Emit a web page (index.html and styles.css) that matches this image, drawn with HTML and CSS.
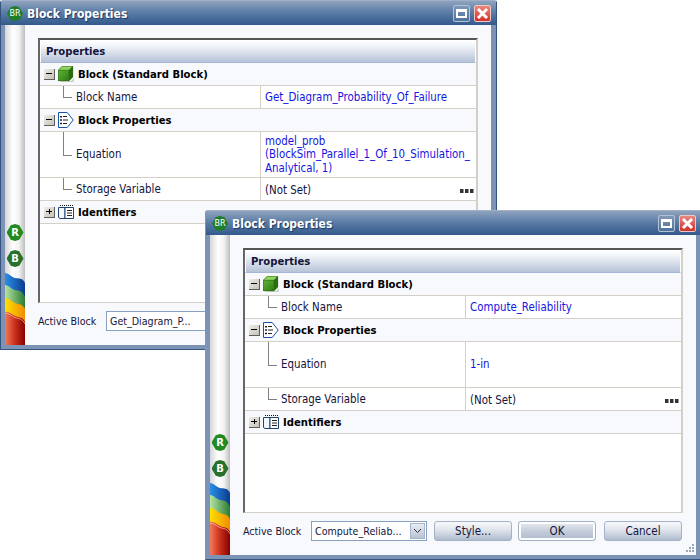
FILE: index.html
```html
<!DOCTYPE html>
<html lang="en">
<head>
<meta charset="utf-8">
<title>Block Properties</title>
<link rel="stylesheet" href="styles.css">
</head>
<body>
<svg class="defs" width="0" height="0" aria-hidden="true">
  <defs>
    <linearGradient id="gBlue" x1="0" x2="1" y1="0" y2="0"><stop offset="0" stop-color="#2a8fe8"/><stop offset="1" stop-color="#0b3b8c"/></linearGradient>
    <linearGradient id="gGreen" x1="0" x2="1" y1="0" y2="0"><stop offset="0" stop-color="#b4e4a4"/><stop offset="1" stop-color="#2c7a30"/></linearGradient>
    <linearGradient id="gYellow" x1="0" x2="1" y1="0" y2="0"><stop offset="0" stop-color="#ffe000"/><stop offset="1" stop-color="#f08c00"/></linearGradient>
    <linearGradient id="gRed" x1="0" x2="1" y1="0" y2="0"><stop offset="0" stop-color="#f5795a"/><stop offset=".5" stop-color="#c8301c"/><stop offset="1" stop-color="#860000"/></linearGradient>
    <linearGradient id="gCube" x1="0" x2="1" y1="0" y2="1"><stop offset="0" stop-color="#62b436"/><stop offset="1" stop-color="#2c7c12"/></linearGradient>
    <symbol id="waves" viewBox="0 0 20 72">
      <path fill="url(#gBlue)" d="M0 0C4 0 6 4 10 5S17 4 20 10V30H0Z"/>
      <path fill="url(#gGreen)" d="M0 12C4 12 6 16 10 17S17 17 20 24V44H0Z"/>
      <path fill="url(#gYellow)" d="M0 25C4 25 6 28 10 30S17 30 20 36V52H0Z"/>
      <path fill="url(#gRed)" d="M0 39C4 38 6 41 10 43S17 43 20 49V72H0Z"/>
      <path fill="none" stroke="#ffc4ac" stroke-opacity=".7" d="M0 40.500C4 39.500 6 43 10 44.500S17 45 20 51"/>
    </symbol>
    <symbol id="cube" viewBox="0 0 16 16">
      <path fill="#c9cfc6" d="M2 15h11l3-3v3l-1 1H3z"/>
      <path fill="url(#gCube)" d="M0 4h11v11H0z"/>
      <path fill="#93d260" d="M0 4 4 0h11l-4 4z"/>
      <path fill="#2b6d10" d="M11 4l4-4v11l-4 4z"/>
      <path fill="none" stroke="#2e6d1a" stroke-width=".6" d="M.3 4.300h10.700v10.400H.3zM.3 4.300 4.200.3h10.500V11L11 14.700M11 4.300 14.700.3"/>
    </symbol>
    <symbol id="tag" viewBox="0 0 16 16">
      <path fill="#fff" stroke="#1c4fa6" d="M.5.5h8.700l6 7.500-6 7.500H.5z"/>
      <path fill="none" stroke="#222" d="M5 4.500h4M5 8h5M5 11.500h4"/>
      <path fill="#222" d="M2 4h2v1.500H2zM2 7.200h2v1.500H2zM2 10.700h2v1.500H2z"/>
    </symbol>
    <symbol id="book" viewBox="0 0 16 15">
      <path fill="#111" d="M2 0h1v1H2zM4 0h1v1H4zM6 0h1v1H6zM8 0h1v1H8zM10 0h1v1h-1zM12 0h1v1h-1zM14 0h1v1h-1z"/>
      <path fill="#f2f7fc" stroke="#1f4470" d="M.5 2.500h6.500v11H2L.5 12.500z"/>
      <path fill="#fff" stroke="#1f4470" d="M7 2.500h8.500v11H7z"/>
      <path fill="none" stroke="#222" d="M9 5.500h5M9 8h5M9 10.500h5"/>
    </symbol>
  </defs>
</svg>

<main class="desktop">
  <section class="window window-back">
    <header class="titlebar">
      <span class="app-badge">BR</span>
      <h1 class="title">Block Properties</h1>
      <span class="win-btn win-max"><i class="max-glyph"></i></span>
      <span class="win-btn win-close"><svg width="13" height="13" viewBox="0 0 13 13"><path d="M2 2l9 9M11 2l-9 9" stroke="#fff" stroke-width="3"/></svg></span>
    </header>
    <div class="frame">
      <aside class="sidebar">
        <span class="rail-badge">R</span>
        <span class="rail-badge">B</span>
        <svg class="waves" width="20" height="72"><use href="#waves"/></svg>
      </aside>
      <div class="panel">
        <div class="grid">
          <div class="grid-head">Properties</div>
          <div class="group"><span class="toggle minus"></span><svg class="gi" width="16" height="16"><use href="#cube"/></svg><span>Block (Standard Block)</span></div>
          <div class="row"><div class="key"><i class="elbow"></i><span class="key-text">Block Name</span></div><div class="val link">Get_Diagram_Probability_Of_Failure</div></div>
          <div class="group"><span class="toggle minus"></span><svg class="gi" width="16" height="16"><use href="#tag"/></svg><span>Block Properties</span></div>
          <div class="row row-tall"><div class="key key-tall"><i class="elbow elbow-tall"></i><span class="key-text">Equation</span></div><div class="val link">model_prob<br>(BlockSim_Parallel_1_Of_10_Simulation_<br>Analytical, 1)</div></div>
          <div class="row"><div class="key"><i class="elbow"></i><span class="key-text">Storage Variable</span></div><div class="val">(Not Set)<svg class="more" width="14" height="4"><path d="M0 0h3.500v4H0zM5 0h3.500v4H5zM10 0h3.500v4H10z"/></svg></div></div>
          <div class="group"><span class="toggle plus"></span><svg class="gi" width="16" height="15"><use href="#book"/></svg><span>Identifiers</span></div>
        </div>
        <footer class="footer">
          <label class="footer-label">Active Block</label>
          <div class="combo"><span class="combo-text">Get_Diagram_P...</span><span class="combo-arrow"><svg width="9" height="6" viewBox="0 0 9 6"><path d="M1 1l3.500 3.500L8 1" fill="none" stroke="#333"/></svg></span></div>
        </footer>
      </div>
    </div>
  </section>

  <section class="window window-front">
    <header class="titlebar">
      <span class="app-badge">BR</span>
      <h1 class="title">Block Properties</h1>
      <span class="win-btn win-max"><i class="max-glyph"></i></span>
      <span class="win-btn win-close"><svg width="13" height="13" viewBox="0 0 13 13"><path d="M2 2l9 9M11 2l-9 9" stroke="#fff" stroke-width="3"/></svg></span>
    </header>
    <div class="frame">
      <aside class="sidebar">
        <span class="rail-badge">R</span>
        <span class="rail-badge">B</span>
        <svg class="waves" width="20" height="72"><use href="#waves"/></svg>
      </aside>
      <div class="panel">
        <div class="grid">
          <div class="grid-head">Properties</div>
          <div class="group"><span class="toggle minus"></span><svg class="gi" width="16" height="16"><use href="#cube"/></svg><span>Block (Standard Block)</span></div>
          <div class="row"><div class="key"><i class="elbow"></i><span class="key-text">Block Name</span></div><div class="val link">Compute_Reliability</div></div>
          <div class="group"><span class="toggle minus"></span><svg class="gi" width="16" height="16"><use href="#tag"/></svg><span>Block Properties</span></div>
          <div class="row row-tall"><div class="key key-tall"><i class="elbow elbow-tall"></i><span class="key-text">Equation</span></div><div class="val link">1-in</div></div>
          <div class="row"><div class="key"><i class="elbow"></i><span class="key-text">Storage Variable</span></div><div class="val">(Not Set)<svg class="more" width="14" height="4"><path d="M0 0h3.500v4H0zM5 0h3.500v4H5zM10 0h3.500v4H10z"/></svg></div></div>
          <div class="group"><span class="toggle plus"></span><svg class="gi" width="16" height="15"><use href="#book"/></svg><span>Identifiers</span></div>
        </div>
        <footer class="footer">
          <label class="footer-label">Active Block</label>
          <div class="combo"><span class="combo-text">Compute_Reliab...</span><span class="combo-arrow"><svg width="9" height="6" viewBox="0 0 9 6"><path d="M1 1l3.500 3.500L8 1" fill="none" stroke="#333"/></svg></span></div>
          <button class="btn btn-style">Style...</button>
          <button class="btn btn-ok">OK</button>
          <button class="btn btn-cancel">Cancel</button>
        </footer>
      </div>
    </div>
    <svg class="grip" width="12" height="12" viewBox="0 0 12 12"><path fill="#9aa8bc" d="M8 1h2v2H8zM5 4h2v2H5zM8 4h2v2H8zM2 7h2v2H2zM5 7h2v2H5zM8 7h2v2H8z"/></svg>
  </section>
</main>
</body>
</html>
```

FILE: styles.css
```css
html, body {
  margin: 0;
  background: #fff;
}

.defs {
  display: block;
  width: 0;
  height: 0;
}

.desktop {
  position: relative;
  width: 700px;
  height: 560px;
  overflow: hidden;
  font-family: "DejaVu Sans Condensed", "DejaVu Sans", sans-serif;
  font-size: 11.400px;
  color: #14143c;
}

.window {
  position: absolute;
  box-sizing: border-box;
  width: 497px;
  height: 350px;
  display: flex;
  flex-direction: column;
  border: 1px solid #34547f;
  border-top-color: #9fb0c8;
  border-radius: 3px 3px 0 0;
  background: #7c93b5;
}

.window-back {
  left: 0;
  top: 0;
}

.window-front {
  left: 205px;
  top: 210px;
  border-left-color: #7f95b5;
}

.titlebar {
  flex: none;
  box-sizing: border-box;
  height: 24px;
  display: flex;
  align-items: center;
  padding: 1px 5px 0 6px;
  background: linear-gradient(#8fa3be, #5d7ea7 45%, #335a8c);
}

.app-badge {
  width: 16px;
  height: 15px;
  margin-right: 4px;
  display: flex;
  align-items: center;
  justify-content: center;
  background: #1f7e2a;
  color: #fff;
  font-family: "DejaVu Sans", sans-serif;
  font-size: 8px;
  clip-path: polygon(50% 0, 78% 8%, 100% 50%, 78% 92%, 50% 100%, 22% 92%, 0 50%, 22% 8%);
}

.title {
  flex: 1;
  margin: 0;
  font-size: 12px;
  font-weight: bold;
  color: #fff;
  text-shadow: 1px 1px 1px #1d3a63;
}

.win-btn {
  box-sizing: border-box;
  width: 17px;
  height: 17px;
  display: flex;
  align-items: center;
  justify-content: center;
  border-radius: 2px;
}

.win-max {
  border: 1px solid #b4c2d6;
  background: linear-gradient(#8197b6, #4e729e);
  margin-right: 4px;
}

.max-glyph {
  box-sizing: border-box;
  width: 11px;
  height: 9px;
  border: 2px solid #fff;
  border-top-width: 3px;
}

.win-close {
  border: 1px solid #f0c8c4;
  background: linear-gradient(#e88880, #d1322a);
}

.frame {
  flex: 1;
  min-height: 0;
  display: flex;
  margin: 0 5px 4px 4px;
}

.sidebar {
  flex: none;
  width: 20px;
  display: flex;
  flex-direction: column;
  align-items: center;
  justify-content: flex-end;
  background: linear-gradient(90deg, #d6d6d6, #fff 40%, #f2f2f2 70%, #bdbdbd);
}

.rail-badge {
  width: 17px;
  height: 17px;
  margin-bottom: 9px;
  display: flex;
  align-items: center;
  justify-content: center;
  background: #238a1f;
  color: #fff;
  font-family: "DejaVu Sans", sans-serif;
  font-weight: bold;
  font-size: 10px;
  clip-path: polygon(50% 0, 75% 8%, 100% 50%, 75% 92%, 50% 100%, 25% 92%, 0 50%, 25% 8%);
}

.rail-badge + .rail-badge {
  background: #27712a;
  margin-bottom: 6px;
}

.waves {
  display: block;
}

.panel {
  flex: 1;
  min-width: 0;
  box-sizing: border-box;
  display: flex;
  flex-direction: column;
  padding: 13px 13px 14px 13px;
  background: #f8f9fd;
}

.grid {
  flex: 1;
  min-height: 0;
  background: #fff;
  border: 1px solid #d4d0c8;
  border-top: 2px solid #555;
  border-left: 2px solid #666;
  border-right-width: 2px;
}

.grid-head {
  box-sizing: border-box;
  height: 23px;
  display: flex;
  align-items: center;
  padding-left: 5px;
  font-size: 11.200px;
  font-weight: bold;
  border: 1px solid #fff;
  border-bottom: 1px solid #a6b6d8;
  background: linear-gradient(#fff, #f0f3f8 25%, #b6c3d8);
}

.group {
  box-sizing: border-box;
  height: 23px;
  display: flex;
  align-items: center;
  padding-left: 4px;
  gap: 3px;
  font-weight: bold;
  font-size: 11.200px;
  color: #000;
  background: #f8f9fd;
  border-bottom: 1px solid #d4d0c8;
}

.gi {
  display: block;
  margin-right: 1px;
}

.toggle {
  box-sizing: border-box;
  position: relative;
  width: 11px;
  height: 11px;
  background: linear-gradient(135deg, #eeece7, #c6c2b8);
  border-right: 1px solid #5e5e5e;
  border-bottom: 1px solid #5e5e5e;
}

.toggle::before {
  content: "";
  position: absolute;
  left: 2px;
  top: 4px;
  width: 6px;
  height: 1px;
  background: #000;
}

.plus::after {
  content: "";
  position: absolute;
  left: 5px;
  top: 2px;
  width: 1px;
  height: 5px;
  background: #000;
}

.row {
  box-sizing: border-box;
  height: 23px;
  display: flex;
  background: #fff;
  border-bottom: 1px solid #d4d0c8;
}

.row-tall {
  height: 46px;
}

.key {
  flex: none;
  width: 221px;
  box-sizing: border-box;
  display: flex;
  align-items: center;
  position: relative;
  border-right: 1px solid #d4d0c8;
  padding-left: 36px;
}

.key-tall {
  padding-bottom: 1px;
}

.key-text {
  color: #14143c;
}

.elbow {
  position: absolute;
  left: 23px;
  top: 0;
  width: 8px;
  height: 11px;
  border-left: 1px solid #808080;
  border-bottom: 1px solid #808080;
}

.elbow-tall {
  height: 23px;
}

.val {
  flex: 1;
  min-width: 0;
  display: flex;
  align-items: center;
  justify-content: space-between;
  padding: 1px 2px 0 4px;
  color: #14143c;
}

.val.link {
  display: block;
  align-self: center;
  line-height: 13.500px;
  color: #1515e0;
  white-space: nowrap;
}

.more {
  display: block;
  fill: #333;
  margin-top: 3px;
}

.footer {
  flex: none;
  height: 20px;
  margin-top: 8px;
  display: flex;
  align-items: center;
  font-size: 10.600px;
}

.footer-label {
  width: 68px;
  flex: none;
}

.combo {
  box-sizing: border-box;
  width: 116px;
  height: 20px;
  flex: none;
  display: flex;
  align-items: center;
  justify-content: space-between;
  padding: 0 1px 0 3px;
  background: #fff;
  border: 1px solid #8aa0c0;
  margin-right: 7px;
}

.combo-arrow {
  box-sizing: border-box;
  width: 15px;
  height: 16px;
  display: flex;
  align-items: center;
  justify-content: center;
  border: 1px solid #a8b6cc;
  background: linear-gradient(#e9edf3, #b6c2d4);
}

.btn {
  box-sizing: border-box;
  flex: none;
  width: 78px;
  height: 20px;
  padding: 0;
  font: inherit;
  font-size: 11.500px;
  color: #14143c;
  border: 1px solid #a4b2c8;
  border-radius: 3px;
  background: linear-gradient(#f8f9fb, #dfe4ec 45%, #afbbce);
}

.btn-ok {
  margin: 0 8px 0 6px;
  border: 1px solid #a4b2c8;
  box-shadow: inset 0 0 0 2px #fdfdfe;
  background: linear-gradient(#e8ebf1, #c0c9d8 60%, #aeb9cc);
}

.grip {
  position: absolute;
  right: 5px;
  bottom: 4px;
}
```
